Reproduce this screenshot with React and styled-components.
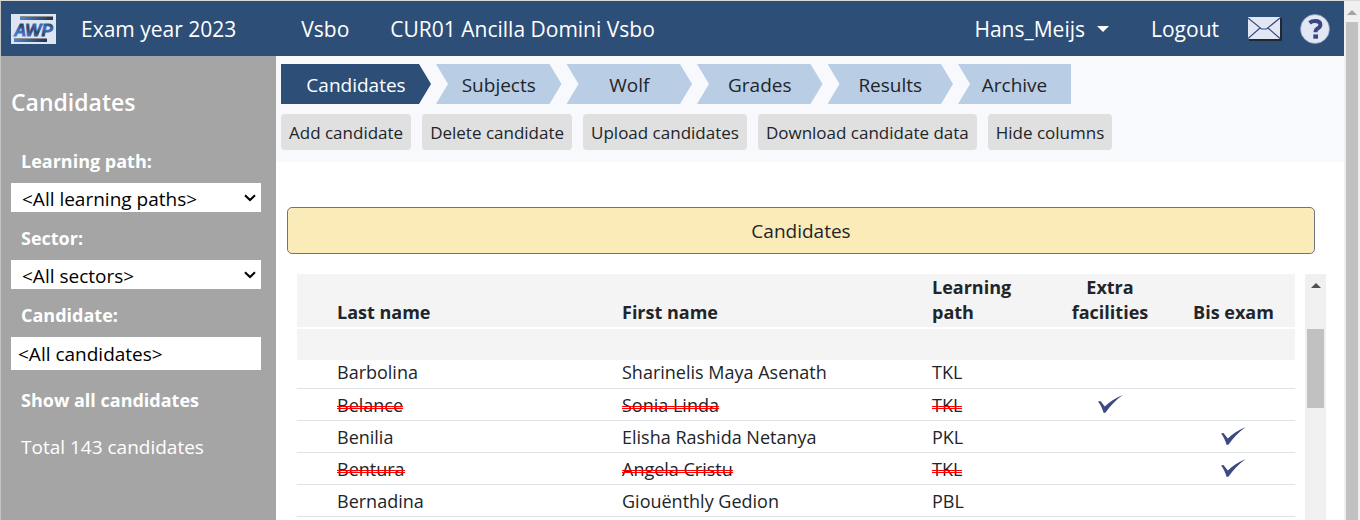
import React from "react";
import styled, { createGlobalStyle } from "styled-components";

const GlobalStyle = createGlobalStyle`
  *, *::before, *::after { box-sizing: border-box; }
  body {
    margin: 0;
    background: #fff;
    color: #212529;
    font-family: "Open Sans", "Noto Sans", sans-serif;
  }
`;

const Page = styled.div`
  display: flex;
  height: 100vh;
  overflow: hidden;
  border-top: 1px solid #d9d9d9;
  border-left: 1px solid #c4c4c4;
`;

const Screen = styled.div`
  flex: 1;
  min-width: 0;
  display: flex;
  flex-direction: column;
`;

const NavBar = styled.nav`
  display: flex;
  align-items: center;
  height: 55px;
  flex-shrink: 0;
  padding: 0 14px 0 10px;
  background: #2d4e77;
  color: #fff;
  font-size: 21px;
  line-height: 30px;
  white-space: nowrap;
`;

const NavItem = styled.a`
  margin-left: ${(p) => p.$gap}px;
  color: inherit;
  text-decoration: none;
`;

const UserMenu = styled.button`
  display: flex;
  align-items: center;
  gap: 12px;
  margin-left: auto;
  padding: 0;
  border: 0;
  background: none;
  color: inherit;
  font: inherit;
`;

const Caret = styled.span`
  border: 6px solid transparent;
  border-top-color: #fff;
  border-bottom: 0;
`;

const IconButton = styled.button`
  display: flex;
  margin-left: ${(p) => p.$gap}px;
  padding: 0;
  border: 0;
  background: none;
`;

const Body = styled.div`
  flex: 1;
  min-height: 0;
  display: flex;
`;

const Sidebar = styled.aside`
  width: 275px;
  flex-shrink: 0;
  padding: 31px 15px 0 10px;
  background: #a5a5a5;
  color: #fff;
  font-size: 18px;
  line-height: 24px;
`;

const SideTitle = styled.h1`
  margin: 0 0 32px;
  font-size: 23px;
  font-weight: 600;
  line-height: 30px;
`;

const Field = styled.div`
  display: flex;
  flex-direction: column;
  gap: 10px;
  margin-bottom: 14px;
`;

const FieldLabel = styled.label`
  padding-left: 10px;
  font-weight: 700;
`;

const SelectBox = styled.div`
  position: relative;
`;

const Select = styled.select`
  display: block;
  appearance: none;
  width: 100%;
  height: 29px;
  padding: 2px 24px 0 11px;
  border: 0;
  border-radius: 0;
  background: #fff;
  color: #000;
  font-family: inherit;
  font-size: 19px;
`;

const Chevron = styled.svg`
  position: absolute;
  top: 11px;
  right: 5px;
  pointer-events: none;
`;

const TextInput = styled.input`
  width: 100%;
  height: 33px;
  padding: 0 7px;
  border: 0;
  color: #000;
  font-family: inherit;
  font-size: 19px;
`;

const ShowAll = styled.button`
  display: block;
  margin: 18px 0 23px;
  padding: 0 10px;
  border: 0;
  background: none;
  color: inherit;
  font: inherit;
  font-weight: 700;
`;

const Total = styled.p`
  margin: 0;
  padding: 0 10px;
  font-size: 19px;
`;

const Main = styled.main`
  flex: 1;
  min-width: 0;
  display: flex;
  flex-direction: column;
`;

const Toolbar = styled.header`
  padding: 8px 5px 12px;
  background: #f8f9fc;
`;

const Tabs = styled.div`
  display: grid;
  grid-template-columns: 150px repeat(4, 1fr) 113px;
  gap: 5px;
  max-width: 790px;
`;

const shapes = {
  first: "polygon(0 0, calc(100% - 12px) 0, 100% 50%, calc(100% - 12px) 100%, 0 100%)",
  middle:
    "polygon(0 0, calc(100% - 12px) 0, 100% 50%, calc(100% - 12px) 100%, 0 100%, 12px 50%)",
  last: "polygon(0 0, 100% 0, 100% 100%, 0 100%, 12px 50%)",
};

const Tab = styled.button`
  height: 40px;
  padding: 2px 0 0;
  border: 0;
  background: ${(p) => (p.$active ? "#2d4e77" : "#b9cde5")};
  color: ${(p) => (p.$active ? "#fff" : "#212529")};
  clip-path: ${(p) => shapes[p.$shape]};
  font-family: inherit;
  font-size: 19px;
`;

const Actions = styled.div`
  display: flex;
  gap: 11px;
  margin-top: 10px;
`;

const ActionButton = styled.button`
  height: 36px;
  padding: 0 8px;
  border: 0;
  border-radius: 4px;
  background: #e0e0e0;
  color: #212529;
  font-family: inherit;
  font-size: 17px;
  white-space: nowrap;
`;

const Content = styled.section`
  flex: 1;
  min-height: 0;
  display: flex;
  flex-direction: column;
  padding: 45px 18px 0 11px;
`;

const Banner = styled.h2`
  margin: 0 11px 20px 0;
  padding-top: 2px;
  border: 1px solid #6c757d;
  border-radius: 5px;
  background: #faebb9;
  font-size: 19px;
  font-weight: 400;
  line-height: 43px;
  text-align: center;
`;

const TableArea = styled.div`
  flex: 1;
  min-height: 0;
  display: flex;
  gap: 10px;
  padding-left: 10px;
  overflow: hidden;
`;

const TableBox = styled.div`
  flex: 1;
  min-width: 0;
`;

const Table = styled.table`
  width: 100%;
  table-layout: fixed;
  border-collapse: separate;
  border-spacing: 0;
  font-size: 18px;
`;

const Col = styled.col`
  width: ${(p) => p.$width};
`;

const HeadCell = styled.th`
  height: 55px;
  padding: 0 0 2px;
  border-bottom: 2px solid #fff;
  background: #f4f4f4;
  font-weight: 700;
  line-height: 25px;
  text-align: ${(p) => (p.$center ? "center" : "left")};
  vertical-align: bottom;
`;

const FilterCell = styled.td`
  height: 31px;
  padding: 0;
  background: #f4f4f4;
`;

const Cell = styled.td`
  height: 32px;
  padding: 0;
  border-bottom: 1px solid #dee2e6;
  line-height: 24px;
  text-align: ${(p) => (p.$center ? "center" : "left")};
  white-space: nowrap;
  tr:first-child > & {
    height: 29px;
    padding-bottom: 4px;
  }
`;

const Name = styled.span``;

const StruckName = styled.s`
  position: relative;
  text-decoration: none;

  &::after {
    content: "";
    position: absolute;
    top: 13px;
    left: 0;
    right: 0;
    height: 3px;
    border: solid #f00;
    border-width: 1px 0;
  }
`;

const Track = styled.div`
  width: ${(p) => p.$width}px;
  flex-shrink: 0;
  display: flex;
  flex-direction: column;
  align-items: center;
  background: #f0f0f0;
`;

const ArrowBox = styled.div`
  height: ${(p) => p.$height}px;
  flex-shrink: 0;
  padding-top: ${(p) => p.$top}px;
`;

const Arrow = styled.div`
  border: 5px solid transparent;
  border-top: 0;
  border-bottom-color: ${(p) => p.$color};
`;

const Thumb = styled.div`
  width: calc(100% - 4px);
  height: ${(p) => p.$height};
  background: #c1c1c1;
`;

const Check = styled.svg`
  display: block;
  margin: 0 auto 2px;
`;

function Logo() {
  return (
    <svg width="45" height="30" viewBox="0 0 45 30" role="img" aria-label="AWP">
      <defs>
        <linearGradient id="bar" x1="0" x2="1" y1="0" y2="0">
          <stop offset="0" stopColor="#4f83d6" />
          <stop offset="1" stopColor="#1f3350" />
        </linearGradient>
        <linearGradient id="letters" x1="0" x2="1" y1="1" y2="0">
          <stop offset="0" stopColor="#4a86e8" />
          <stop offset="0.3" stopColor="#3f6fc0" />
          <stop offset="0.5" stopColor="#2b3f66" />
          <stop offset="0.7" stopColor="#3f6fc0" />
          <stop offset="1" stopColor="#27364f" />
        </linearGradient>
      </defs>
      <rect width="45" height="30" fill="#dce6f2" />
      <rect x="9" y="2" width="33" height="1" fill="#8e8e8e" />
      <rect x="9" y="3" width="33" height="3" fill="url(#bar)" />
      <rect x="3" y="24" width="33" height="1" fill="#8e8e8e" />
      <rect x="3" y="25" width="33" height="3" fill="url(#bar)" />
      <text
        x="3"
        y="22"
        fontFamily="Liberation Sans, sans-serif"
        fontSize="17"
        fontWeight="700"
        fontStyle="italic"
        fill="url(#letters)"
        stroke="url(#letters)"
        strokeWidth="0.8"
      >
        AWP
      </text>
    </svg>
  );
}

function MailIcon() {
  return (
    <svg width="34" height="24" viewBox="0 0 34 24" aria-hidden="true">
      <path d="M1 23h32V1" fill="none" stroke="#1c1c1c" strokeWidth="1.5" />
      <rect width="32" height="22" fill="#e1e8f3" />
      <path
        d="M0 1l13.500 11h5L32 1M0 21.500l12-10.500M32 21.500l-12-10.500"
        fill="none"
        stroke="#3a4a82"
        strokeWidth="1.2"
      />
    </svg>
  );
}

function HelpIcon() {
  return (
    <svg width="30" height="30" viewBox="0 0 30 30" aria-hidden="true">
      <circle cx="15" cy="15" r="14.5" fill="#e1e8f3" stroke="#8793bd" strokeWidth="0.7" />
      <path
        d="M9.500 8.800C11.200 7.500 13 6.900 15 6.900c3.400 0 5.400 1.300 5.400 3.800 0 1.700-.9 2.700-2.700 3.700-1.700 1-2.200 1.900-2.200 3.800"
        fill="none"
        stroke="#3b4782"
        strokeWidth="4"
      />
      <rect x="13.300" y="20.400" width="4.700" height="4.300" fill="#3b4782" />
    </svg>
  );
}

function CheckMark() {
  return (
    <Check width="25" height="18" viewBox="0 0 25 18" role="img" aria-label="Yes">
      <path
        d="M0 6.500l2.500-.6 4.300 5.600C11.500 7 17 3 24.800 0 18 5 12.500 10.500 7.600 17.600l-1.900.3C4.200 13.500 2.700 9.500 0 6.500z"
        fill="#3d4a80"
      />
    </Check>
  );
}

function SelectField({ id, label, value }) {
  return (
    <Field>
      <FieldLabel htmlFor={id}>{label}</FieldLabel>
      <SelectBox>
        <Select id={id}>
          <option>{value}</option>
        </Select>
        <Chevron width="12" height="8" viewBox="0 0 12 8" aria-hidden="true">
          <path d="M1 1.200l5 4.800 5-4.800" fill="none" stroke="#000" strokeWidth="2" />
        </Chevron>
      </SelectBox>
    </Field>
  );
}

const tabs = ["Candidates", "Subjects", "Wolf", "Grades", "Results", "Archive"];

const actions = [
  "Add candidate",
  "Delete candidate",
  "Upload candidates",
  "Download candidate data",
  "Hide columns",
];

const rows = [
  { last: "Barbolina", first: "Sharinelis Maya Asenath", path: "TKL" },
  { last: "Belance", first: "Sonia Linda", path: "TKL", struck: true, extra: true },
  { last: "Benilia", first: "Elisha Rashida Netanya", path: "PKL", bis: true },
  { last: "Bentura", first: "Angela Cristu", path: "TKL", struck: true, bis: true },
  { last: "Bernadina", first: "Giouënthly Gedion", path: "PBL" },
];

function tabShape(i) {
  if (i === 0) return "first";
  return i === tabs.length - 1 ? "last" : "middle";
}

function CandidateRow({ row }) {
  const Text = row.struck ? StruckName : Name;
  return (
    <tr>
      <Cell />
      <Cell><Text>{row.last}</Text></Cell>
      <Cell><Text>{row.first}</Text></Cell>
      <Cell><Text>{row.path}</Text></Cell>
      <Cell $center>{row.extra && <CheckMark />}</Cell>
      <Cell $center>{row.bis && <CheckMark />}</Cell>
    </tr>
  );
}

export default function App() {
  return (
    <>
      <GlobalStyle />
      <Page>
        <Screen>
          <NavBar>
            <Logo />
            <NavItem href="#year" $gap={25}>Exam year 2023</NavItem>
            <NavItem href="#department" $gap={65}>Vsbo</NavItem>
            <NavItem href="#school" $gap={41}>CUR01 Ancilla Domini Vsbo</NavItem>
            <UserMenu type="button">
              Hans_Meijs
              <Caret />
            </UserMenu>
            <NavItem href="#logout" $gap={42}>Logout</NavItem>
            <IconButton type="button" aria-label="Messages" $gap={29}>
              <MailIcon />
            </IconButton>
            <IconButton type="button" aria-label="Help" $gap={18}>
              <HelpIcon />
            </IconButton>
          </NavBar>
          <Body>
            <Sidebar>
              <SideTitle>Candidates</SideTitle>
              <SelectField id="path" label="Learning path:" value="<All learning paths>" />
              <SelectField id="sector" label="Sector:" value="<All sectors>" />
              <Field>
                <FieldLabel htmlFor="candidate">Candidate:</FieldLabel>
                <TextInput id="candidate" type="text" defaultValue="<All candidates>" />
              </Field>
              <ShowAll type="button">Show all candidates</ShowAll>
              <Total>Total 143 candidates</Total>
            </Sidebar>
            <Main>
              <Toolbar>
                <Tabs>
                  {tabs.map((t, i) => (
                    <Tab key={t} type="button" $active={i === 0} $shape={tabShape(i)}>
                      {t}
                    </Tab>
                  ))}
                </Tabs>
                <Actions>
                  {actions.map((a) => (
                    <ActionButton key={a} type="button">{a}</ActionButton>
                  ))}
                </Actions>
              </Toolbar>
              <Content>
                <Banner>Candidates</Banner>
                <TableArea>
                  <TableBox>
                    <Table>
                      <colgroup>
                        <Col $width="40px" />
                        <Col $width="285px" />
                        <Col $width="auto" />
                        <Col $width="116px" />
                        <Col $width="124px" />
                        <Col $width="123px" />
                      </colgroup>
                      <thead>
                        <tr>
                          <HeadCell />
                          <HeadCell>Last name</HeadCell>
                          <HeadCell>First name</HeadCell>
                          <HeadCell>Learning<br />path</HeadCell>
                          <HeadCell $center>Extra<br />facilities</HeadCell>
                          <HeadCell $center>Bis exam</HeadCell>
                        </tr>
                        <tr>
                          <FilterCell colSpan={6} />
                        </tr>
                      </thead>
                      <tbody>
                        {rows.map((r) => (
                          <CandidateRow key={r.last} row={r} />
                        ))}
                      </tbody>
                    </Table>
                  </TableBox>
                  <Track $width={21}>
                    <ArrowBox $height={55} $top={9}>
                      <Arrow $color="#505050" />
                    </ArrowBox>
                    <Thumb $height="79px" />
                  </Track>
                </TableArea>
              </Content>
            </Main>
          </Body>
        </Screen>
        <Track $width={16}>
          <ArrowBox $height={21} $top={9}>
            <Arrow $color="#a3a3a3" />
          </ArrowBox>
          <Thumb $height="100%" />
        </Track>
      </Page>
    </>
  );
}
